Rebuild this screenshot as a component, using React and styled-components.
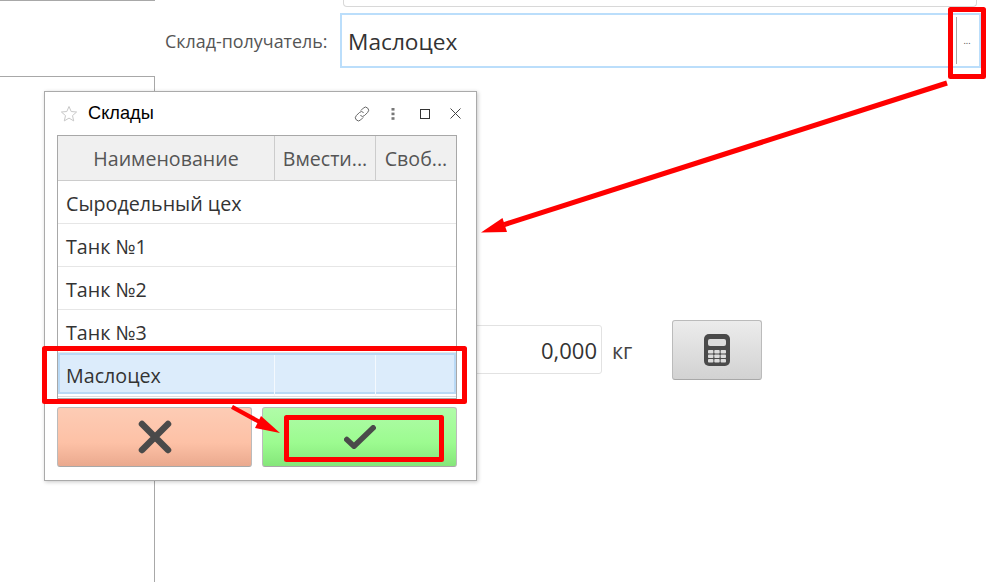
import React from "react";
import styled, { createGlobalStyle } from "styled-components";

const GlobalStyle = createGlobalStyle`
  html, body {
    margin: 0;
    padding: 0;
    background: #fff;
    overflow: hidden;
  }
  body {
    font-family: "Open Sans", "Liberation Sans", sans-serif;
    color: #333;
  }
`;

const rows = ["Сыродельный цех", "Танк №1", "Танк №2", "Танк №3"];

function App() {
  return (
    <Page>
      <GlobalStyle />
      <Sidebar>
        <SideTop />
        <SidePanel />
      </Sidebar>
      <Main>
        <CutField />
        <FieldRow>
          <FieldLabel>Склад-получатель:</FieldLabel>
          <FieldInput>
            <FieldValue>Маслоцех</FieldValue>
            <PickButton>...</PickButton>
          </FieldInput>
        </FieldRow>
        <WeightRow>
          <WeightInput>0,000</WeightInput>
          <Unit>кг</Unit>
          <CalcButton aria-label="Калькулятор">
            <svg width="26" height="32" viewBox="0 0 26 32">
              <rect width="26" height="32" rx="5" fill="#4a4a4a" />
              <rect x="4" y="5" width="18" height="7" rx="2" fill="#dcdcdc" />
              {[16, 20.5, 25].map((y) =>
                [4, 10.3, 16.6].map((x) => (
                  <rect key={`${x}-${y}`} x={x} y={y} width="5.4" height="3.6" rx="0.8" fill="#dcdcdc" />
                ))
              )}
            </svg>
          </CalcButton>
        </WeightRow>
      </Main>

      <Dialog>
        <DialogHead>
          <svg width="18" height="18" viewBox="0 0 18 18">
            <path
              d="M9 1.5l2.2 5 5.4.5-4.1 3.6 1.2 5.3L9 13.1l-4.7 2.8 1.2-5.3L1.4 7l5.4-.5z"
              fill="none"
              stroke="#c8c8c8"
              strokeWidth="1"
            />
          </svg>
          <DialogTitle>Склады</DialogTitle>
          <HeadIcons>
            <svg width="18" height="18" viewBox="0 0 18 18" fill="none" stroke="#666" strokeWidth="1">
              <path d="M7.8 5.6l2.5-2.5a3 3 0 0 1 4.4 4.3l-3 3a3 3 0 0 1-4.3 0" />
              <path d="M10.2 12.4l-2.5 2.5a3 3 0 0 1-4.4-4.3l3-3a3 3 0 0 1 4.3 0" />
            </svg>
            <svg width="4" height="12" viewBox="0 0 4 12" fill="#777">
              <rect x="0.5" y="0" width="3" height="2.6" />
              <rect x="0.5" y="4.6" width="3" height="2.6" />
              <rect x="0.5" y="9.2" width="3" height="2.6" />
            </svg>
            <svg width="10" height="10" viewBox="0 0 10 10" fill="none" stroke="#333" strokeWidth="1">
              <rect x="0.5" y="0.5" width="9" height="9" />
            </svg>
            <svg width="11" height="11" viewBox="0 0 11 11" fill="none" stroke="#444" strokeWidth="1">
              <path d="M0.5 0.5l10 10M10.5 0.5l-10 10" />
            </svg>
          </HeadIcons>
        </DialogHead>
        <Table>
          <HeadRow>
            <HeadCell>Наименование</HeadCell>
            <HeadCell>Вмести...</HeadCell>
            <HeadCell>Своб...</HeadCell>
          </HeadRow>
          {rows.map((name) => (
            <Row key={name}>{name}</Row>
          ))}
          <SelectedRow>
            <SelectedCell>Маслоцех</SelectedCell>
            <SelectedCell />
            <SelectedCell />
          </SelectedRow>
        </Table>
        <Buttons>
          <CancelButton aria-label="Отмена">
            <svg width="34" height="34" viewBox="0 0 34 34">
              <path d="M4 4l26 26M30 4L4 30" stroke="#4a4a4a" strokeWidth="6.5" strokeLinecap="round" />
            </svg>
          </CancelButton>
          <OkButton aria-label="Выбрать">
            <svg width="32" height="24" viewBox="0 0 32 24" fill="none">
              <path d="M2.8 14.5l7.2 6.7L29.2 2.8" stroke="#4a4a4a" strokeWidth="5.5" strokeLinecap="round" strokeLinejoin="round" />
            </svg>
          </OkButton>
        </Buttons>
      </Dialog>

      <Marks viewBox="0 0 991 582">
        <g fill="none" stroke="#f00" strokeWidth="5" strokeLinejoin="round">
          <rect x="950.5" y="9.5" width="33" height="67" />
          <rect x="44.5" y="348.5" width="420" height="53" />
          <rect x="286.5" y="417.5" width="155" height="42" />
        </g>
        <g fill="#f00">
          <path d="M946.2 80.6l1.6 4.8L505 227l-1.6-4.8z" />
          <path d="M481 232.5l21.5-14.5 4.5 14z" />
          <path d="M231 408.8l2-3.8 30 16.4-2 3.8z" />
          <path d="M280 433l-25-5 6-12z" />
        </g>
      </Marks>
    </Page>
  );
}

const Page = styled.div`
  position: relative;
  display: flex;
  width: 991px;
  height: 582px;
  overflow: hidden;
`;

const Sidebar = styled.div`
  display: flex;
  flex-direction: column;
  width: 155px;
  flex-shrink: 0;
`;

const SideTop = styled.div`
  height: 76px;
  box-sizing: border-box;
  border-top: 1px solid #a8a8a8;
`;

const SidePanel = styled.div`
  flex: 1;
  border-top: 1px solid #a8a8a8;
  border-right: 1px solid #a8a8a8;
`;

const Main = styled.div`
  flex: 1;
  padding-left: 10px;
`;

const CutField = styled.div`
  box-sizing: border-box;
  width: 634px;
  height: 7px;
  margin-left: 178px;
  border: 1px solid #d8d8d8;
  border-top: none;
  border-radius: 0 0 4px 4px;
`;

const FieldRow = styled.div`
  display: flex;
  align-items: center;
  margin-top: 6px;
`;

const FieldLabel = styled.div`
  width: 175px;
  font-size: 17.9px;
  color: #555;
  white-space: nowrap;
`;

const FieldInput = styled.div`
  box-sizing: border-box;
  display: flex;
  align-items: center;
  justify-content: space-between;
  width: 641px;
  height: 55px;
  padding: 0 2px 0 6px;
  border: 2px solid #bbdefb;
`;

const FieldValue = styled.span`
  padding-top: 1px;
  font-size: 22.7px;
  color: #333;
`;

const PickButton = styled.div`
  width: 21px;
  height: 47px;
  box-sizing: border-box;
  border-left: 1px solid #a8a8a8;
  text-align: center;
  font-size: 9px;
  line-height: 47px;
  color: #444;
`;

const WeightRow = styled.div`
  display: flex;
  height: 60px;
  margin-top: 252px;
  margin-left: 175px;
  align-items: flex-start;
`;

const WeightInput = styled.div`
  box-sizing: border-box;
  width: 262px;
  height: 49px;
  margin-top: 5px;
  padding-right: 4px;
  border: 1px solid #e2e2e2;
  border-radius: 3px;
  text-align: right;
  font-size: 22px;
  line-height: 49px;
  color: #333;
`;

const Unit = styled.span`
  width: 60px;
  margin-left: 10px;
  font-size: 21.5px;
  line-height: 61px;
  color: #444;
`;

const GreyButton = styled.div`
  box-sizing: border-box;
  display: flex;
  align-items: center;
  justify-content: center;
  border: 1px solid #bbb;
  border-bottom-color: #a8a8a8;
  border-radius: 3px;
`;

const CalcButton = styled(GreyButton)`
  width: 90px;
  height: 60px;
  background: linear-gradient(#ececec, #d2d2d2);
`;

const Dialog = styled.div`
  position: absolute;
  left: 44px;
  top: 91px;
  box-sizing: border-box;
  width: 433px;
  height: 390px;
  padding: 0 19px 0 12px;
  background: #fff;
  border: 1px solid #aaa;
  box-shadow: 1px 1px 4px rgba(0, 0, 0, 0.22);
`;

const DialogHead = styled.div`
  display: flex;
  align-items: center;
  height: 43px;
  padding-left: 3px;
`;

const DialogTitle = styled.span`
  margin-left: 10px;
  font-family: "Liberation Sans", Arial, sans-serif;
  font-size: 18.2px;
  color: #000;
`;

const HeadIcons = styled.div`
  display: grid;
  grid-template-columns: repeat(4, 31.3px);
  justify-items: center;
  align-items: center;
  margin-left: auto;
  margin-right: -14.5px;
`;

const Table = styled.div`
  box-sizing: border-box;
  width: 400px;
  height: 264px;
  border: 1px solid #a8a8a8;
`;

const HeadRow = styled.div`
  display: grid;
  grid-template-columns: 216px 101px 1fr;
  height: 45px;
  background: #f0f0f0;
  border-bottom: 1px solid #ccc;
  box-sizing: border-box;
`;

const HeadCell = styled.div`
  display: flex;
  align-items: center;
  justify-content: center;
  font-size: 19.6px;
  color: #555;
  white-space: nowrap;
  overflow: hidden;

  & + & {
    border-left: 1px solid #ccc;
  }
`;

const Row = styled.div`
  box-sizing: border-box;
  height: 43px;
  padding-left: 8px;
  border-bottom: 1px solid #e6e6e6;
  font-size: 19.7px;
  line-height: 45px;
  color: #333;
`;

const SelectedRow = styled.div`
  box-sizing: border-box;
  display: grid;
  grid-template-columns: 214px 101px 1fr;
  height: 41px;
  background: #dcecfb;
  border: 2px solid #b9d9f5;
  box-shadow: 0 2px 0 #fff, 0 3px 0 #ddd;
`;

const SelectedCell = styled.div`
  padding-left: 6px;
  font-size: 19.7px;
  line-height: 41px;
  color: #333;

  & + & {
    border-left: 1px solid #f4f9fe;
    padding-left: 0;
  }
`;

const Buttons = styled.div`
  display: grid;
  grid-template-columns: 195px 195px;
  gap: 10px;
  margin-top: 8px;
`;

const CancelButton = styled(GreyButton)`
  height: 60px;
  background: linear-gradient(#fdccb5 0%, #fdc1a6 60%, #eaa98e 100%);
`;

const OkButton = styled(GreyButton)`
  height: 60px;
  background: linear-gradient(#b0fca8 0%, #9cfb90 60%, #85e67a 100%);
`;

const Marks = styled.svg`
  position: absolute;
  inset: 0;
  width: 991px;
  height: 582px;
  pointer-events: none;
`;

export default App;
